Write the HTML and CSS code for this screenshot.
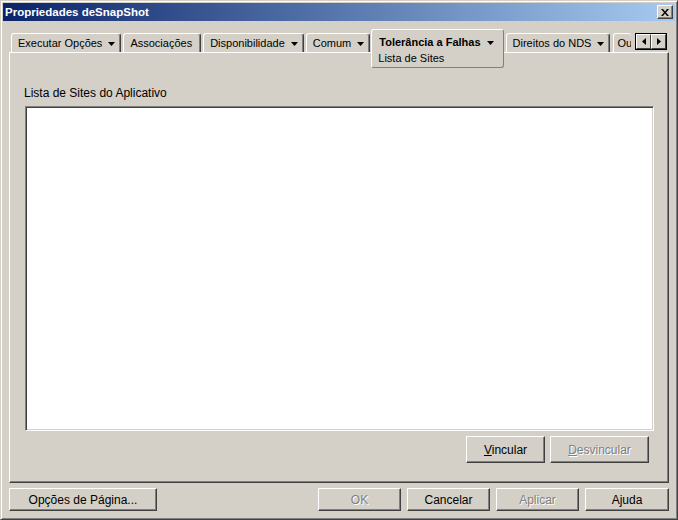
FILE: index.html
```html
<!DOCTYPE html>
<html lang="pt">
<head>
    <meta charset="UTF-8">
    <title>Propriedades deSnapShot</title>
    <link rel="stylesheet" href="styles.css">
</head>
<body>
    <div class="window">
        <div class="titlebar">
            <span class="title">Propriedades deSnapShot</span>
            <button class="close-button">
                <svg width="8" height="7" viewBox="0 0 8 7"><path d="M0 0h2l2 2.5 2-2.5h2l-3 3.5 3 3.5h-2l-2-2.5-2 2.5h-2l3-3.5z" fill="#000"/></svg>
            </button>
        </div>

        <div class="content">
            <div class="tab-strip">
                <div class="tabs">
                    <div class="tab">Executar Opções <svg class="arrow" width="7" height="4" viewBox="0 0 7 4"><path d="M0 0h7l-3.5 4z"/></svg></div>
                    <div class="tab plain">Associações</div>
                    <div class="tab">Disponibilidade <svg class="arrow" width="7" height="4" viewBox="0 0 7 4"><path d="M0 0h7l-3.5 4z"/></svg></div>
                    <div class="tab">Comum <svg class="arrow" width="7" height="4" viewBox="0 0 7 4"><path d="M0 0h7l-3.5 4z"/></svg></div>
                    <div class="tab selected">
                        <div class="tab-head">Tolerância a Falhas <svg class="arrow" width="7" height="4" viewBox="0 0 7 4"><path d="M0 0h7l-3.5 4z"/></svg></div>
                        <div class="tab-item">Lista de Sites</div>
                    </div>
                    <div class="tab">Direitos do NDS <svg class="arrow" width="7" height="4" viewBox="0 0 7 4"><path d="M0 0h7l-3.5 4z"/></svg></div>
                    <div class="tab clipped">Ou</div>
                </div>
                <div class="scroll-buttons">
                    <button class="scroll-btn"><svg width="4" height="7" viewBox="0 0 4 7"><path d="M4 0v7l-4-3.5z"/></svg></button>
                    <button class="scroll-btn"><svg width="4" height="7" viewBox="0 0 4 7"><path d="M0 0v7l4-3.5z"/></svg></button>
                </div>
            </div>

            <div class="panel">
                <div class="field-label">Lista de Sites do Aplicativo</div>
                <div class="list-box"></div>
                <div class="panel-buttons">
                    <button class="win-button link-btn"><u>V</u>incular</button>
                    <button class="win-button unlink-btn" disabled><u>D</u>esvincular</button>
                </div>
            </div>

            <div class="footer">
                <button class="win-button page-btn">Opções de Pá<u>g</u>ina...</button>
                <div class="footer-right">
                    <button class="win-button dlg-btn" disabled>OK</button>
                    <button class="win-button dlg-btn">Cancelar</button>
                    <button class="win-button dlg-btn" disabled>Aplicar</button>
                    <button class="win-button dlg-btn help-btn">A<u>j</u>uda</button>
                </div>
            </div>
        </div>
    </div>
</body>
</html>
```

FILE: styles.css
```css
body {
    margin: 0;
    background-color: #d4d0c8;
    font-family: "Liberation Sans", Arial, sans-serif;
    color: #000;
}

.window {
    width: 678px;
    height: 520px;
    box-sizing: border-box;
    padding: 2px;
    background-color: #d4d0c8;
    border: 1px solid;
    border-color: #d4d0c8 #404040 #404040 #d4d0c8;
    box-shadow: inset 1px 1px #fff, inset -1px -1px #808080;
}

.titlebar {
    height: 18px;
    display: flex;
    align-items: center;
    justify-content: space-between;
    background: linear-gradient(to right, #0a246a, #a6caf0);
}

.title {
    padding-left: 2px;
    color: #fff;
    font-weight: bold;
    font-size: 11.5px;
    line-height: 18px;
    white-space: nowrap;
}

.close-button {
    width: 16px;
    height: 14px;
    margin-right: 2px;
    padding: 0;
    box-sizing: border-box;
    background-color: #d4d0c8;
    border: 1px solid;
    border-color: #fff #404040 #404040 #fff;
    box-shadow: inset -1px -1px #808080;
    display: flex;
    align-items: center;
    justify-content: center;
}

.content {
    padding: 8px 6px 0 6px;
}

/* tab row */
.tab-strip {
    height: 23px;
    display: flex;
    align-items: flex-end;
    padding: 0 1px 0 2px;
}

.tabs {
    flex: 1;
    display: flex;
    align-items: flex-end;
    gap: 2px;
}

.tab {
    height: 19px;
    box-sizing: border-box;
    padding: 0 5px 0 6px;
    display: flex;
    align-items: center;
    gap: 6px;
    font-size: 11px;
    line-height: 16px;
    white-space: nowrap;
    border-top: 1px solid #fff;
    border-left: 1px solid #fff;
    border-right: 1px solid #404040;
    border-radius: 3px 3px 0 0;
    box-shadow: inset -1px 0 #808080;
}

.tab.plain {
    padding-right: 8px;
}

.arrow {
    fill: #000;
    margin-top: 1px;
}

.tab.selected {
    position: relative;
    z-index: 2;
    height: 39px;
    margin: 0 0 -16px -1px;
    padding: 4px 9px 0 7px;
    flex-direction: column;
    align-items: flex-start;
    gap: 0;
    background-color: #d4d0c8;
    border-bottom: 1px solid #808080;
    border-right-color: #808080;
    border-radius: 3px;
    box-shadow: none;
}

.tab-head {
    display: flex;
    align-items: center;
    gap: 6px;
    font-weight: bold;
}

.tab-item {
    margin-left: -1px;
}

.tab.clipped {
    width: 18px;
    overflow: hidden;
    padding: 0 0 0 3px;
    border-right: none;
    box-shadow: none;
    margin-left: 1px;
}

.scroll-buttons {
    display: flex;
    margin: 0 1px 2px 0;
    border: 1px solid #000;
}

.scroll-btn {
    width: 15px;
    height: 15px;
    padding: 0;
    box-sizing: border-box;
    background-color: #d4d0c8;
    border: 1px solid;
    border-color: #fff #404040 #404040 #fff;
    display: flex;
    align-items: center;
    justify-content: center;
    fill: #000;
}

/* page */
.panel {
    height: 431px;
    box-sizing: border-box;
    padding: 33px 14px 0 14px;
    border-top: 1px solid #fff;
    border-left: 1px solid #fff;
    border-right: 1px solid #404040;
    border-bottom: 1px solid #404040;
    box-shadow: inset -1px -1px #808080;
}

.field-label {
    font-size: 12px;
    line-height: 14px;
    margin-bottom: 6px;
}

.list-box {
    height: 325px;
    margin-left: 1px;
    box-sizing: border-box;
    background-color: #fff;
    border: 1px solid;
    border-color: #808080 #fff #fff #808080;
    box-shadow: inset 1px 1px #404040, inset -1px -1px #d4d0c8;
}

.panel-buttons {
    display: flex;
    justify-content: flex-end;
    gap: 5px;
    margin: 5px 5px 0 0;
}

.win-button {
    height: 27px;
    padding: 0;
    box-sizing: border-box;
    background-color: #d4d0c8;
    border: 1px solid;
    border-color: #fff #404040 #404040 #fff;
    box-shadow: inset -1px -1px #808080;
    font-family: "Liberation Sans", Arial, sans-serif;
    font-size: 12px;
    color: #000;
}

.win-button:disabled {
    color: #808080;
    text-shadow: 1px 1px 0 #fff;
}

.link-btn {
    width: 79px;
}

.unlink-btn {
    width: 99px;
}

.footer {
    margin-top: 5px;
    display: flex;
    justify-content: space-between;
}

.footer .win-button {
    height: 23px;
}

.page-btn {
    width: 148px;
}

.footer-right {
    display: flex;
    gap: 6px;
}

.dlg-btn {
    width: 83px;
}

.help-btn {
    width: 84px;
}
```
